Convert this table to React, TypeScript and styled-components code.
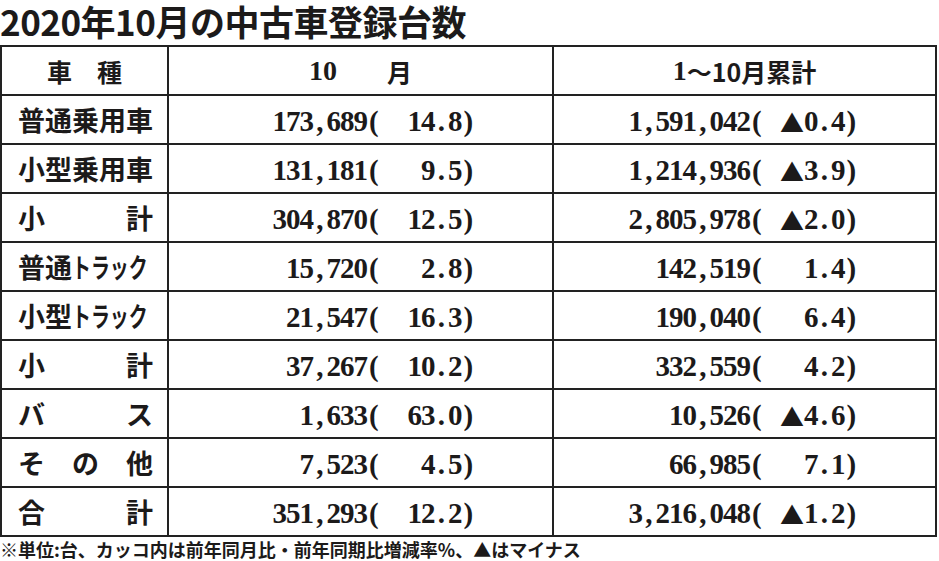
import React from 'react';
import styled, {createGlobalStyle} from 'styled-components';

type RowType = {
    label: string
    kana?: string
    spread?: boolean
    month: string
    total: string
}

const rows: RowType[] = [
    {label: '普通乗用車', month: '173,689(  14.8)', total: '1,591,042( ▲0.4)'},
    {label: '小型乗用車', month: '131,181(   9.5)', total: '1,214,936( ▲3.9)'},
    {label: '小計', spread: true, month: '304,870(  12.5)', total: '2,805,978( ▲2.0)'},
    {label: '普通', kana: 'トラック', month: '15,720(   2.8)', total: '142,519(   1.4)'},
    {label: '小型', kana: 'トラック', month: '21,547(  16.3)', total: '190,040(   6.4)'},
    {label: '小計', spread: true, month: '37,267(  10.2)', total: '332,559(   4.2)'},
    {label: 'バス', spread: true, month: '1,633(  63.0)', total: '10,526( ▲4.6)'},
    {label: 'その他', spread: true, month: '7,523(   4.5)', total: '66,985(   7.1)'},
    {label: '合計', spread: true, month: '351,293(  12.2)', total: '3,216,048( ▲1.2)'},
]

const Figure = (props: { value: string }) => {
    return (
        <FigureRow>
            {props.value.split('').map((ch, i) =>
                ch === '▲'
                    ? <Minus key={i}>▲</Minus>
                    : <Glyph key={i}>{ch === ' ' ? '\u00a0' : ch}</Glyph>
            )}
        </FigureRow>
    );
};

const Label = (props: { row: RowType }) => {
    const {row} = props
    if (row.spread) {
        return (
            <LabelText $spread>
                {row.label.split('').map((ch, i) => <span key={i}>{ch}</span>)}
            </LabelText>
        )
    }
    return (
        <LabelText>
            {row.label}
            {row.kana && <Kana>{row.kana}</Kana>}
        </LabelText>
    )
}

export default function App() {
    return (
        <Page>
            <GlobalStyle/>
            <Title>2020年10月の中古車登録台数</Title>

            <Table>
                <HeadCell>車　種</HeadCell>
                <HeadCell><Serif>10</Serif>　　月</HeadCell>
                <HeadCell><Serif>1</Serif>～10月累計</HeadCell>

                {rows.map((row, i) => (
                    <React.Fragment key={i}>
                        <LabelCell><Label row={row}/></LabelCell>
                        <NumCell><Figure value={row.month}/></NumCell>
                        <NumCell><Figure value={row.total}/></NumCell>
                    </React.Fragment>
                ))}
            </Table>

            <Note>※単位:台、カッコ内は前年同月比・前年同期比増減率%、▲はマイナス</Note>
        </Page>
    );
}

const GlobalStyle = createGlobalStyle`
  html, body {
    margin: 0;
    padding: 0;
    background: #ffffff;
  }

  body {
    font-family: "Noto Sans CJK JP", "Noto Sans", sans-serif;
    color: #1c1a1a;
  }
`

const Page = styled.div`
  width: 939px;
  height: 561px;
  overflow: hidden;
  background: #ffffff;
`

const Title = styled.h1`
  margin: 0;
  padding-top: 2px;
  height: 43px;
  font-size: 35px;
  line-height: 38px;
  font-weight: 700;
  letter-spacing: -0.5px;
  white-space: nowrap;
`

const Table = styled.div`
  display: grid;
  grid-template-columns: 167px 385px 383px;
  grid-auto-rows: 49px;
  width: 937px;
  border-top: 2px solid #222;
  border-left: 2px solid #222;
  box-sizing: border-box;
`

const Cell = styled.div`
  border-right: 2px solid #222;
  border-bottom: 2px solid #222;
  display: flex;
  align-items: center;
  box-sizing: border-box;
  white-space: nowrap;
`

const HeadCell = styled(Cell)`
  justify-content: center;
  font-size: 25px;
  font-weight: 700;
`

const Serif = styled.span`
  font-family: "Liberation Serif", serif;
  font-size: 28px;
  font-weight: 700;
`

const LabelCell = styled(Cell)`
  padding-left: 16px;
`

const LabelText = styled.div<{ $spread?: boolean }>`
  display: flex;
  justify-content: ${props => props.$spread ? 'space-between' : 'flex-start'};
  width: ${props => props.$spread ? '135px' : 'auto'};
  font-size: 27px;
  line-height: 1;
  font-weight: 700;
`

const Kana = styled.span`
  display: inline-block;
  transform: scaleX(0.7);
  transform-origin: left center;
  margin-right: -32px;
`

const NumCell = styled(Cell)`
  justify-content: flex-end;
  padding-right: 77px;
`

const FigureRow = styled.div`
  display: flex;
  padding-top: 4px;
`

const Glyph = styled.span`
  display: inline-block;
  width: 13.5px;
  text-align: center;
  font-family: "Liberation Serif", serif;
  font-size: 29px;
  font-weight: 700;
  line-height: 1;
`

const Minus = styled.span`
  display: inline-block;
  width: 27px;
  text-align: right;
  font-size: 24px;
  line-height: 29px;
`

const Note = styled.div`
  margin-top: 2px;
  font-size: 18px;
  line-height: 20px;
  font-weight: 700;
  white-space: nowrap;
`
